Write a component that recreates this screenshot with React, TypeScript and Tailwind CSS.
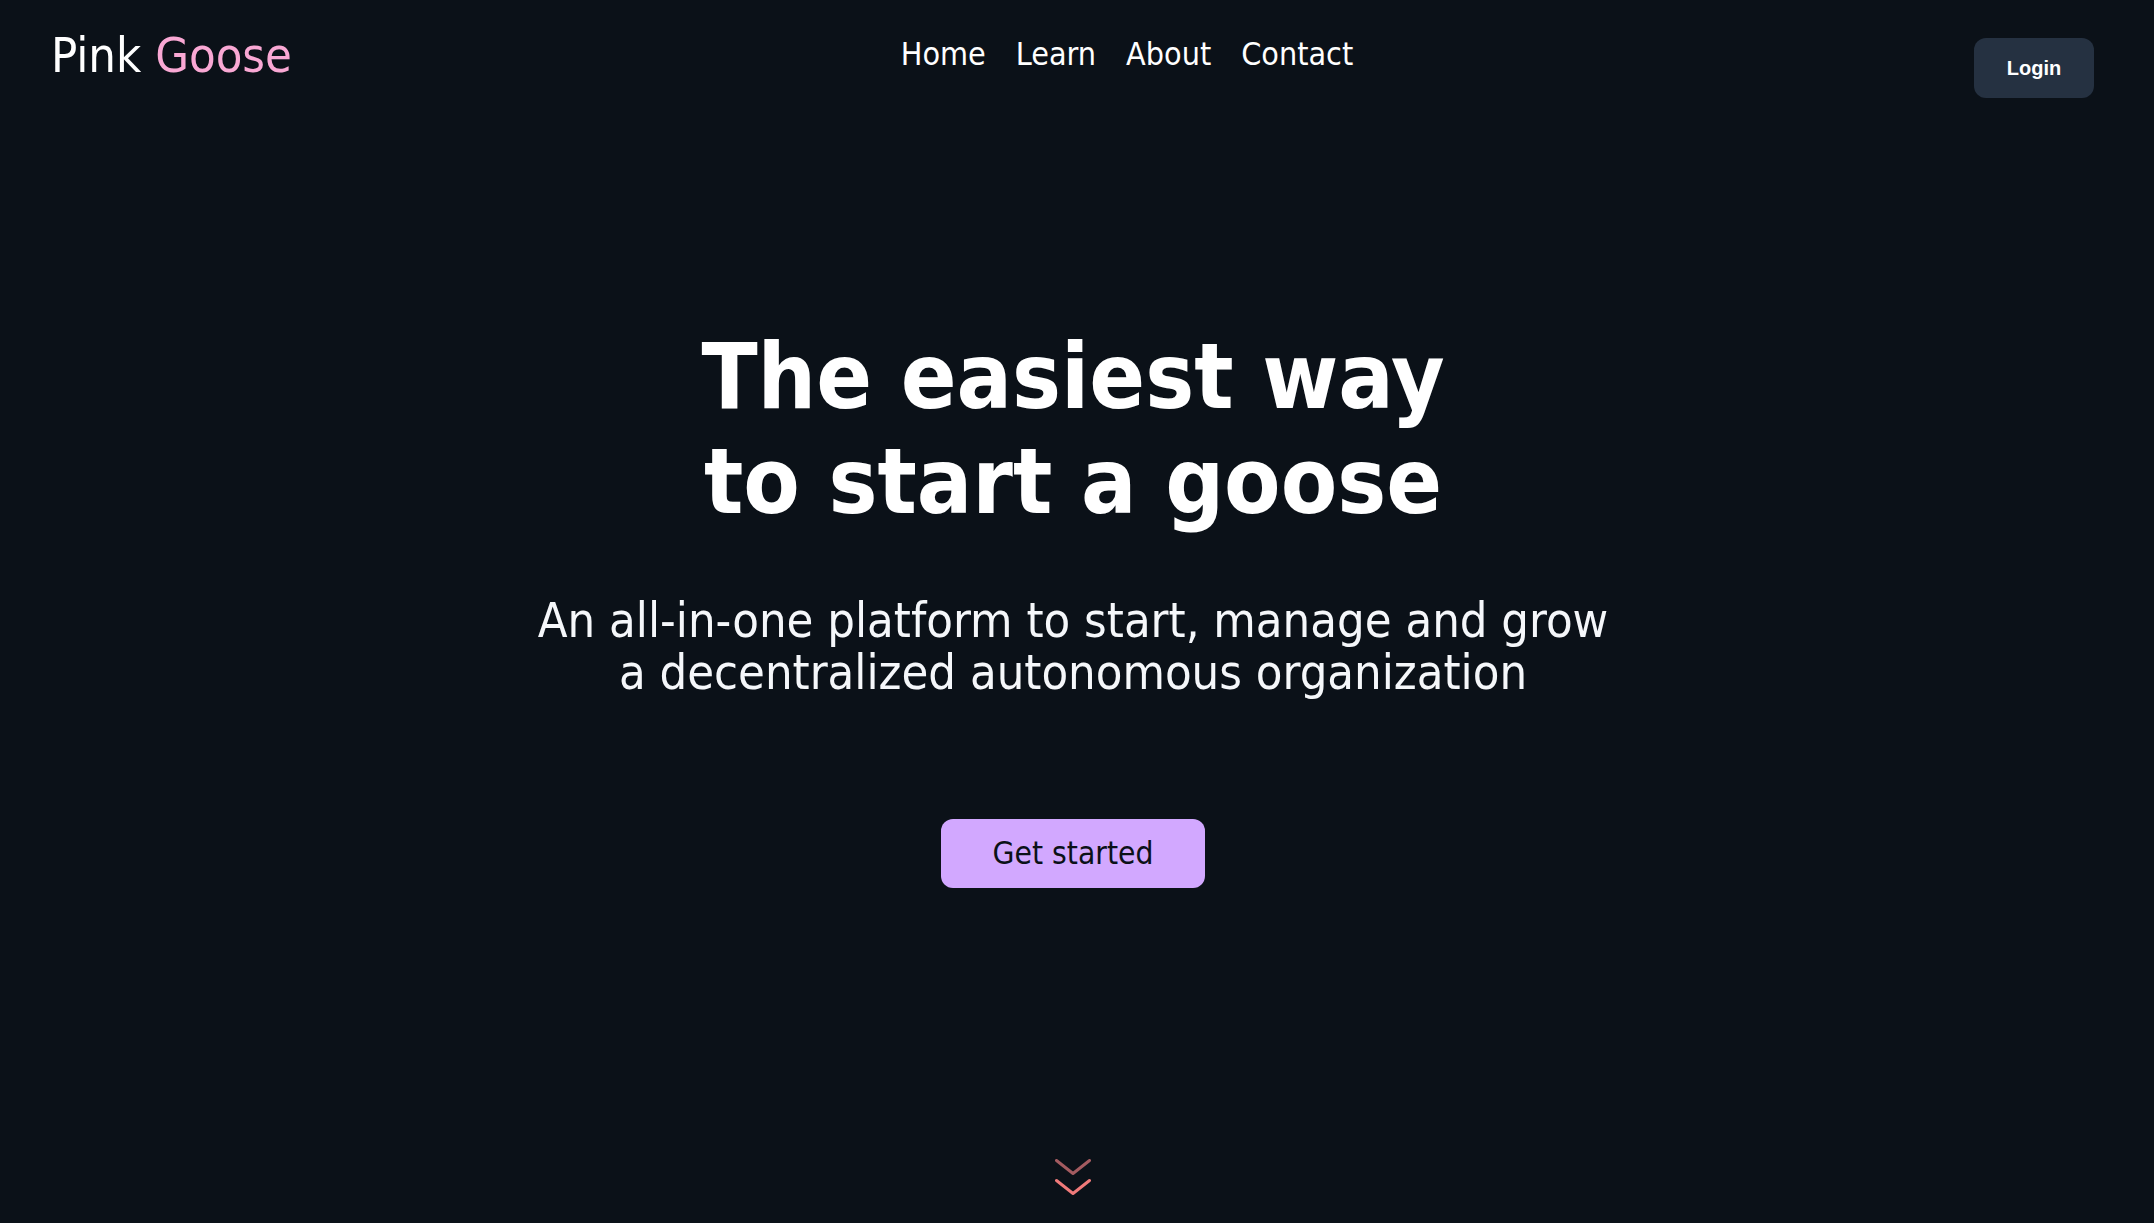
import React from "react";

const Header: React.FC = () => {
  return (
    <header className="flex justify-between items-start pl-[51px] pr-[60px] pt-[28px]">
      <a href="#" className="-mt-[1px] text-[48.5px] leading-[56px] text-white">
        Pink <span className="text-[#f9a8d4]">Goose</span>
      </a>
      <nav className="flex gap-[30px] mt-[8px] mr-[12px] text-[32px] leading-[36px] text-white">
        <a href="#">Home</a>
        <a href="#">Learn</a>
        <a href="#">About</a>
        <a href="#">Contact</a>
      </nav>
      <button className="mt-[10px] w-[120px] h-[60px] rounded-xl bg-[#253141] text-white text-[20px] font-bold font-['Liberation_Sans',Arial,sans-serif]">
        Login
      </button>
    </header>
  );
};

const ScrollHint: React.FC = () => (
  <svg width="36" height="38" viewBox="0 0 36 38" fill="none" strokeWidth="3" strokeLinecap="round" strokeLinejoin="round">
    <path d="M1.5 1.5 L18 14.5 L34.5 1.5" stroke="#a35b60" />
    <path d="M1.5 21.5 L18 34.5 L34.5 21.5" stroke="#f07a7a" />
  </svg>
);

const App: React.FC = () => {
  return (
    <div className="min-h-screen bg-[#0b1118] font-['DejaVu_Sans_Condensed','DejaVu_Sans',Verdana,sans-serif]">
      <Header />
      <main className="flex flex-col items-center text-center pr-[8px]">
        <h1 className="mt-[226px] text-[91.5px] leading-[105px] font-bold text-white">
          The easiest way
          <br />
          to start a goose
        </h1>
        <p className="mt-[60px] text-[48.5px] leading-[52px] text-[#f5f7fa]">
          An all-in-one platform to start, manage and grow
          <br />
          a decentralized autonomous organization
        </p>
        <button className="mt-[121px] w-[264px] h-[69px] rounded-xl bg-[#d2a8ff] text-[31.5px] text-[#0b1118]">
          Get started
        </button>
        <div className="mt-[271px]">
          <ScrollHint />
        </div>
      </main>
    </div>
  );
};

export default App;
